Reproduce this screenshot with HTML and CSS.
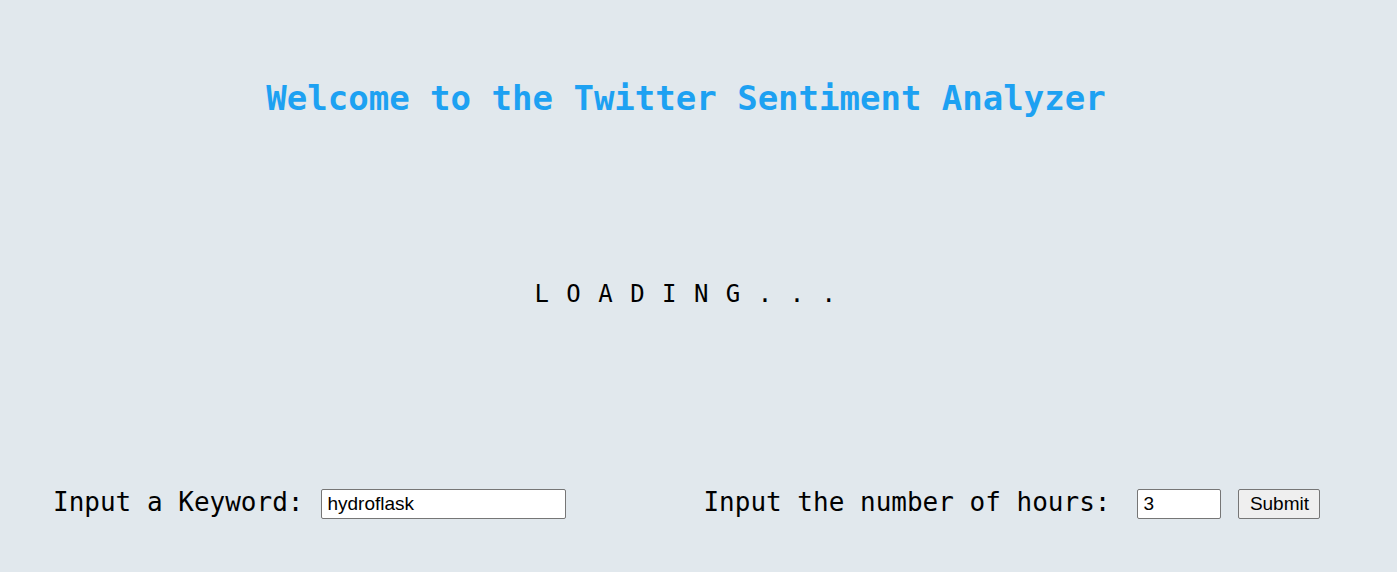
FILE: index.html
```html
<!DOCTYPE html>
<html>
<head>
<meta charset="utf-8">
<link rel="stylesheet" href="styles.css">
</head>
<body>
<div class="page">
  <h1 class="title">Welcome to the Twitter Sentiment Analyzer</h1>
  <div class="loading">L O A D I N G . . .</div>
  <form class="controls">
    <label class="label">Input a Keyword:</label>
    <input class="field keyword" type="text" value="hydroflask">
    <label class="label label-hours">Input the number of hours:</label>
    <input class="field hours" type="text" value="3">
    <button class="submit" type="button">Submit</button>
  </form>
</div>
</body>
</html>
```

FILE: styles.css
```css
html, body {
  margin: 0;
  padding: 0;
  background: #e1e8ed;
  height: 100%;
}
.page {
  font-family: "DejaVu Sans Mono", monospace;
  color: #000;
  padding-right: 25px;
}
.title {
  margin: 78px 0 0 0;
  font-size: 34px;
  font-weight: bold;
  color: #1da1f2;
  text-align: center;
  line-height: normal;
}
.loading {
  margin-top: 162px;
  text-align: center;
  font-size: 24px;
  line-height: 28px;
  letter-spacing: 1.5px;
}
.controls {
  margin: 181px 0 0 0;
  padding-left: 53px;
  display: flex;
  align-items: center;
}
.label {
  font-size: 26px;
  line-height: normal;
  margin-top: -4px;
}
.label-hours {
  margin-left: 137px;
}
.field {
  box-sizing: border-box;
  height: 30px;
  border: 1px solid #767676;
  border-radius: 2px;
  background: #fff;
  font-family: "Liberation Sans", Arial, sans-serif;
  font-size: 19px;
  padding: 1px 5px;
  color: #000;
}
.keyword {
  margin-left: 18px;
  width: 245px;
}
.hours {
  margin-left: 27px;
  width: 84px;
}
.submit {
  box-sizing: border-box;
  margin-left: 17px;
  width: 82px;
  height: 30px;
  border: 1px solid #767676;
  border-radius: 2px;
  background: #efefef;
  font-family: "Liberation Sans", Arial, sans-serif;
  font-size: 19px;
  color: #000;
  padding: 1px 6px;
}
```
